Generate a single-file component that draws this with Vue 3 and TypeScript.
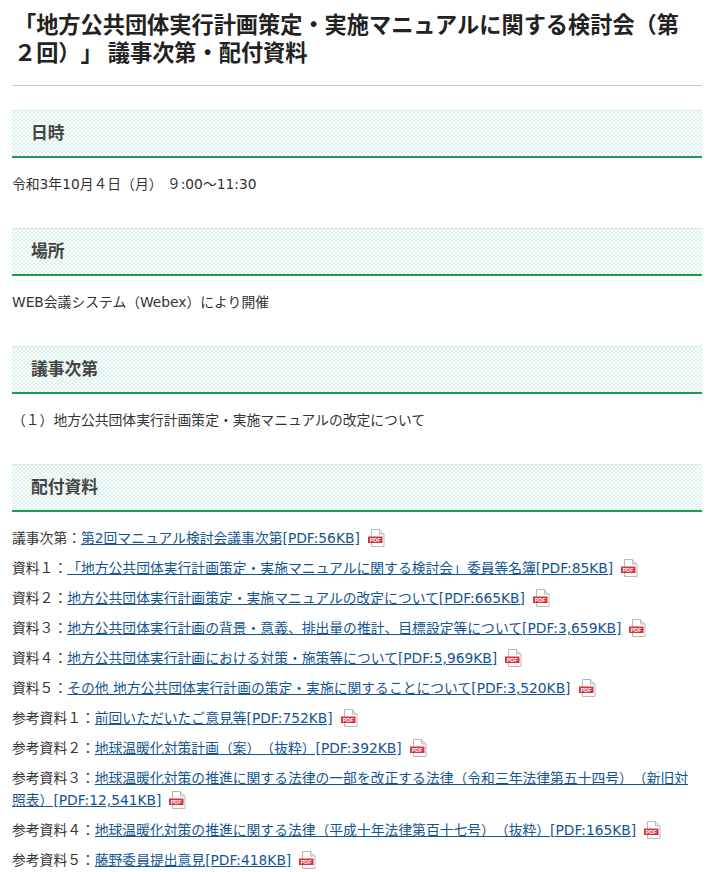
<script setup lang="ts">
interface Row { label: string; text: string }
const rows: Row[] = [
  { label: '議事次第：', text: '第2回マニュアル検討会議事次第[PDF:56KB]' },
  { label: '資料１：', text: '「地方公共団体実行計画策定・実施マニュアルに関する検討会」委員等名簿[PDF:85KB]' },
  { label: '資料２：', text: '地方公共団体実行計画策定・実施マニュアルの改定について[PDF:665KB]' },
  { label: '資料３：', text: '地方公共団体実行計画の背景・意義、排出量の推計、目標設定等について[PDF:3,659KB]' },
  { label: '資料４：', text: '地方公共団体実行計画における対策・施策等について[PDF:5,969KB]' },
  { label: '資料５：', text: 'その他 地方公共団体実行計画の策定・実施に関することについて[PDF:3,520KB]' },
  { label: '参考資料１：', text: '前回いただいたご意見等[PDF:752KB]' },
  { label: '参考資料２：', text: '地球温暖化対策計画（案）（抜粋）[PDF:392KB]' },
  { label: '参考資料３：', text: '地球温暖化対策の推進に関する法律の一部を改正する法律（令和三年法律第五十四号）（新旧対照表）[PDF:12,541KB]' },
  { label: '参考資料４：', text: '地球温暖化対策の推進に関する法律（平成十年法律第百十七号）（抜粋）[PDF:165KB]' },
  { label: '参考資料５：', text: '藤野委員提出意見[PDF:418KB]' },
]
</script>

<template>
  <div class="page">
    <h1 class="title">「地方公共団体実行計画策定・実施マニュアルに関する検討会（第２回）」 議事次第・配付資料</h1>
    <section class="section">
      <h2 class="heading">日時</h2>
      <p class="text">令和3年10月４日（月） ９:00～11:30</p>
    </section>
    <section class="section">
      <h2 class="heading">場所</h2>
      <p class="text">WEB会議システム（Webex）により開催</p>
    </section>
    <section class="section">
      <h2 class="heading">議事次第</h2>
      <p class="text">（１）地方公共団体実行計画策定・実施マニュアルの改定について</p>
    </section>
    <section class="section">
      <h2 class="heading">配付資料</h2>
      <div class="rows">
        <p v-for="row in rows" :key="row.label" class="row">
          {{ row.label }}<a href="#" class="link">{{ row.text }}</a>
          <svg class="pdf" width="17" height="18" viewBox="0 0 17 18" aria-hidden="true">
            <path d="M3.5 .5H11.5L16 5V17.5H3.5Z" fill="#fff" stroke="#b9b9b9" />
            <path d="M11.5 .5V5H16" fill="#e6e6e6" stroke="#b9b9b9" />
            <rect x="0" y="7.5" width="14.5" height="6.5" fill="#d5343c" />
            <text x="7.2" y="12.8" class="pdf-label">PDF</text>
          </svg>
        </p>
      </div>
    </section>
  </div>
</template>

<style>
html, body { margin: 0; background: #fff; }
</style>

<style scoped>
.page {
  height: 872px;
  overflow: hidden;
  box-sizing: border-box;
  padding: 0 10px 0 12px;
  font-family: "DejaVu Sans", "Noto Sans CJK JP", sans-serif;
  font-size: 13.8px;
  line-height: 22px;
  color: #333;
  text-spacing-trim: space-all;
}
.title {
  margin: 0;
  height: 86px;
  box-sizing: border-box;
  padding: 9px 8px 0 2px;
  border-bottom: 1px solid #c8c8c8;
  font-family: "Noto Sans CJK JP", sans-serif;
  font-size: 22.2px;
  line-height: 28px;
  font-weight: 700;
  color: #222;
}
.section { margin-top: 24px; }
.section + .section { margin-top: 33px; }
.heading {
  margin: 0;
  height: 48px;
  box-sizing: border-box;
  padding-left: 19px;
  border-top: 1px solid #d3ece7;
  border-bottom: 2px solid #1f9a54;
  font-family: "Noto Sans CJK JP", sans-serif;
  font-size: 16.8px;
  line-height: 43px;
  font-weight: 700;
  color: #444;
  background-color: #fff;
  background-image:
    radial-gradient(circle, #d8f1ec .7px, transparent 1px),
    radial-gradient(circle, #d8f1ec .7px, transparent 1px);
  background-size: 4px 4px;
  background-position: 0 0, 2px 2px;
}
.text { margin: 15px 0 0; }
.rows { margin-top: 15px; padding-right: 10px; }
.row { margin: 0 0 8px; }
.link { color: #14558f; text-decoration: underline; }
.pdf { vertical-align: -4px; margin-left: 8px; }
.pdf-label {
  font-family: "Liberation Sans", sans-serif;
  font-size: 5.5px;
  font-weight: 700;
  fill: #fff;
  text-anchor: middle;
}
</style>
